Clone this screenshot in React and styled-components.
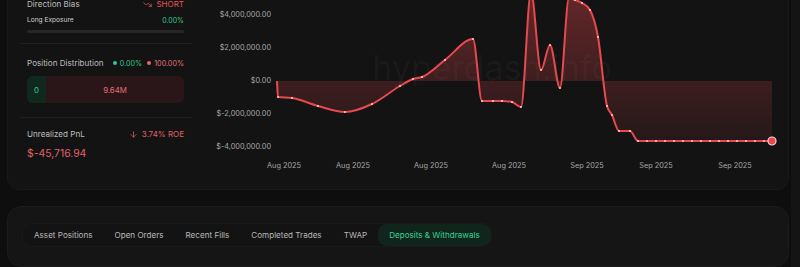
import React from "react";
import styled, { createGlobalStyle } from "styled-components";
import { TrendingDown, ArrowDown } from "lucide-react";

const GlobalStyle = createGlobalStyle`
  html, body {
    margin: 0;
    background: #0e0e0e;
    overflow: hidden;
  }
  body {
    font-family: Inter, "Noto Sans", sans-serif;
    color: #c4c4c4;
  }
`;

const GREEN = "#35c48e";
const RED = "#e5535b";

const points = [
  [277, 81], [278, 97], [292, 98], [318, 106], [345, 112], [372, 104],
  [400, 86], [413, 79], [422, 77], [445, 60], [473, 39], [482, 101],
  [493, 101], [502, 101], [512, 102], [521, 107], [531, -8], [541, 70],
  [550, 45], [560, 88], [569, -2], [575, 0], [582, 3], [590, 10],
  [598, 37], [607, 106], [612, 115], [619, 131], [630, 131], [638, 141],
];
for (let x = 647; x < 772; x += 9) points.push([x, 141]);
points.push([772, 141]);

const yLabels = [
  ["$4,000,000.00", 15],
  ["$2,000,000.00", 48],
  ["$0.00", 81],
  ["$-2,000,000.00", 114],
  ["$-4,000,000.00", 147],
];

const xLabels = [
  ["Aug 2025", 284], ["Aug 2025", 353], ["Aug 2025", 431], ["Aug 2025", 509],
  ["Sep 2025", 587], ["Sep 2025", 656], ["Sep 2025", 735],
];

const tabs = [
  "Asset Positions",
  "Open Orders",
  "Recent Fills",
  "Completed Trades",
  "TWAP",
  "Deposits & Withdrawals",
];

// same idea as d3 curveMonotoneX
function monotonePath(p) {
  const n = p.length;
  const s = [];
  for (let i = 0; i < n - 1; i++) {
    s[i] = (p[i + 1][1] - p[i][1]) / (p[i + 1][0] - p[i][0]);
  }
  const t = new Array(n);
  t[0] = s[0];
  t[n - 1] = s[n - 2];
  for (let i = 1; i < n - 1; i++) {
    const h0 = p[i][0] - p[i - 1][0];
    const h1 = p[i + 1][0] - p[i][0];
    const s0 = s[i - 1];
    const s1 = s[i];
    const q = (s0 * h1 + s1 * h0) / (h0 + h1);
    t[i] =
      (Math.sign(s0) + Math.sign(s1)) *
        Math.min(Math.abs(s0), Math.abs(s1), 0.5 * Math.abs(q)) || 0;
  }
  let d = `M${p[0][0]},${p[0][1]}`;
  for (let i = 0; i < n - 1; i++) {
    const [x0, y0] = p[i];
    const [x1, y1] = p[i + 1];
    const h = (x1 - x0) / 3;
    d += ` C${x0 + h},${y0 + t[i] * h} ${x1 - h},${y1 - t[i + 1] * h} ${x1},${y1}`;
  }
  return d;
}

const PnlChart = () => {
  const line = monotonePath(points);
  const area = `${line} L772,81 L277,81 Z`;
  return (
    <ChartSvg width="576" height="180" viewBox="0 0 576 180">
      <defs>
        <linearGradient
          id="pnlFill"
          gradientUnits="userSpaceOnUse"
          x1="0"
          y1="-5"
          x2="0"
          y2="141"
        >
          <stop offset="0" stopColor="#e5484d" stopOpacity="0.38" />
          <stop offset="0.6" stopColor="#e5484d" stopOpacity="0.2" />
          <stop offset="1" stopColor="#e5484d" stopOpacity="0.09" />
        </linearGradient>
      </defs>
      <g transform="translate(-200, 2)">
        <text
          x="492"
          y="80"
          textAnchor="middle"
          fontSize="34"
          fontFamily="Inter, sans-serif"
          fill="#ffffff"
          fillOpacity="0.035"
        >
          hyperdash.info
        </text>
        <path d={area} fill="url(#pnlFill)" />
        <path d={line} fill="none" stroke="#e8494f" strokeWidth="2" />
        {points.slice(1, -1).map(([x, y], i) => (
          <circle key={i} cx={x} cy={y} r="0.9" fill="#ffdcdc" />
        ))}
        <circle cx="772" cy="141" r="4" fill="#e5484d" stroke="#f8d4d4" strokeWidth="1.2" />
        {yLabels.map(([label, y]) => (
          <AxisText key={label} x="271" y={y} textAnchor="end" dominantBaseline="middle">
            {label}
          </AxisText>
        ))}
        {xLabels.map(([label, x], i) => (
          <AxisText key={i} x={x} y="166" textAnchor="middle" dominantBaseline="middle">
            {label}
          </AxisText>
        ))}
      </g>
    </ChartSvg>
  );
};

const App = () => {
  return (
    <>
      <GlobalStyle />
      <Page>
        <Main>
          <TopCard>
            <LeftCol>
              <Section $pt={0} $pb={10}>
                <Row>
                  <Label>Direction Bias</Label>
                  <Value $color={RED}>
                    <TrendingDown size={9} strokeWidth={2} />
                    SHORT
                  </Value>
                </Row>
                <SubRow>
                  <SmallLabel>Long Exposure</SmallLabel>
                  <SmallValue $color={GREEN}>0.00%</SmallValue>
                </SubRow>
                <Track />
              </Section>
              <Section $pt={13} $pb={14}>
                <Row>
                  <Label>Position Distribution</Label>
                  <Legend>
                    <Dot $color={GREEN} />
                    <LegendText $color={GREEN}>0.00%</LegendText>
                    <Dot $color="#e8607a" />
                    <LegendText $color="#e0707a">100.00%</LegendText>
                  </Legend>
                </Row>
                <DistBar>
                  <Segment $bg="#10291f" $color={GREEN} $width="19px">
                    0
                  </Segment>
                  <Segment $bg="#2a1518" $color="#e0707a" $width="auto">
                    9.64M
                  </Segment>
                </DistBar>
              </Section>
              <Section $pt={10} $pb={0} $last>
                <Row>
                  <Label>Unrealized PnL</Label>
                  <Value $color="#e0606a">
                    <ArrowDown size={9} strokeWidth={2} />
                    3.74% ROE
                  </Value>
                </Row>
                <BigValue>$-45,716.94</BigValue>
              </Section>
            </LeftCol>
            <ChartWrap>
              <PnlChart />
            </ChartWrap>
          </TopCard>
          <BottomCard>
            <TabStrip>
              {tabs.map((tab) => (
                <Tab key={tab} $active={tab === "Deposits & Withdrawals"}>
                  {tab}
                </Tab>
              ))}
            </TabStrip>
          </BottomCard>
        </Main>
        <SideStrip />
      </Page>
    </>
  );
};

export default App;

const Page = styled.div`
  display: grid;
  grid-template-columns: 782px 9px;
  column-gap: 2px;
  padding-left: 7px;
  margin-top: -18px;
  height: calc(100vh + 18px);
  box-sizing: border-box;
`;

const Main = styled.div`
  display: flex;
  flex-direction: column;
  gap: 16px;
`;

const SideStrip = styled.div`
  background: #141414;
`;

const TopCard = styled.div`
  display: flex;
  gap: 8px;
  padding: 15px 12px 11px 12px;
  background: #131313;
  border: 1px solid #191919;
  border-radius: 12px;
`;

const LeftCol = styled.div`
  width: 172px;
  flex: none;
  display: flex;
  flex-direction: column;
`;

const Section = styled.div`
  padding: ${(p) => p.$pt}px 8px ${(p) => p.$pb}px 7px;
  border-bottom: ${(p) => (p.$last ? "none" : "1px solid #1f1f1f")};
`;

const Row = styled.div`
  display: flex;
  align-items: center;
  justify-content: space-between;
  height: 12px;
`;

const Label = styled.span`
  font-size: 8.1px;
  color: #bdbdbd;
  white-space: nowrap;
`;

const Value = styled.span`
  display: flex;
  align-items: center;
  gap: 4px;
  font-size: 8px;
  color: ${(p) => p.$color};
`;

const SubRow = styled.div`
  display: flex;
  align-items: center;
  justify-content: space-between;
  height: 12px;
  margin-top: 4px;
`;

const SmallLabel = styled.span`
  font-size: 6.6px;
  color: #d2d2d2;
`;

const SmallValue = styled.span`
  font-size: 7px;
  color: ${(p) => p.$color};
`;

const Track = styled.div`
  margin-top: 4px;
  height: 3px;
  border-radius: 2px;
  background: #262626;
`;

const Legend = styled.div`
  display: flex;
  align-items: center;
`;

const Dot = styled.span`
  width: 4px;
  height: 4px;
  border-radius: 50%;
  background: ${(p) => p.$color};
  margin: 0 3px 0 5px;
`;

const LegendText = styled.span`
  font-size: 7.2px;
  color: ${(p) => p.$color};
`;

const DistBar = styled.div`
  display: flex;
  height: 27px;
  margin-top: 7px;
  border-radius: 6px;
  overflow: hidden;
`;

const Segment = styled.div`
  display: flex;
  align-items: center;
  justify-content: center;
  width: ${(p) => p.$width};
  flex: ${(p) => (p.$width === "auto" ? "1" : "none")};
  background: ${(p) => p.$bg};
  color: ${(p) => p.$color};
  font-size: 7.8px;
`;

const BigValue = styled.div`
  margin-top: 6px;
  line-height: 16px;
  font-size: 10.4px;
  color: #e0606a;
`;

const ChartWrap = styled.div`
  flex: 1;
  display: flex;
`;

const ChartSvg = styled.svg`
  display: block;
  overflow: visible;
`;

const AxisText = styled.text`
  font-family: Inter, sans-serif;
  font-size: 7.3px;
  fill: #a8a8a8;
`;

const BottomCard = styled.div`
  flex: 1;
  padding: 15px 14px;
  background: #151515;
  border: 1px solid #1c1c1c;
  border-radius: 14px;
`;

const TabStrip = styled.div`
  display: inline-flex;
  align-items: stretch;
  height: 22px;
  margin-top: -1px;
  border: 1px solid #1a1a1a;
  border-radius: 10px;
  background: #131313;
`;

const Tab = styled.div`
  display: flex;
  align-items: center;
  padding: 0 11px;
  border-radius: 9px;
  font-size: 8.1px;
  white-space: nowrap;
  color: ${(p) => (p.$active ? "#3ccf95" : "#b8b8b8")};
  background: ${(p) => (p.$active ? "#10261d" : "transparent")};
`;
